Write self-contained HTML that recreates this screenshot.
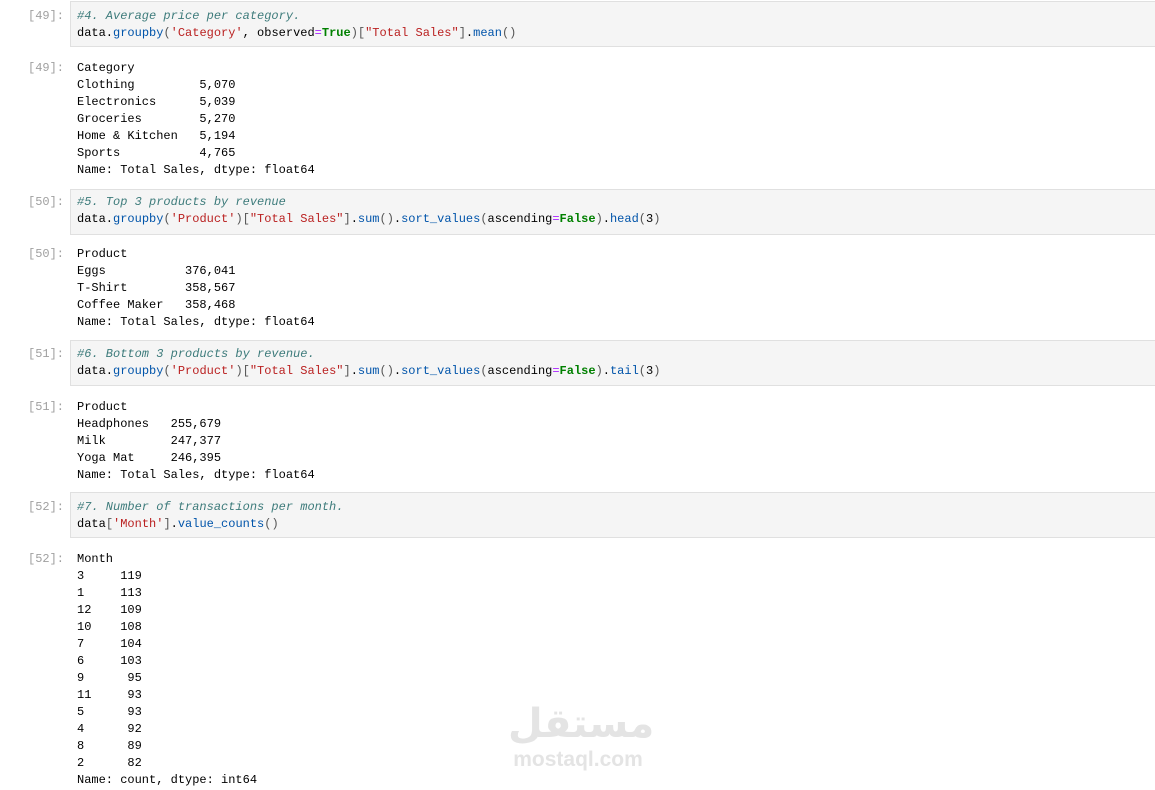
<!DOCTYPE html>
<html><head><meta charset="utf-8"><style>
body{margin:0;width:1155px;height:790px;background:#fff;position:relative;overflow:hidden;font-family:"Liberation Mono",monospace;font-size:12px;color:#000}
.box{position:absolute;left:70px;right:-2px;background:#f5f5f5;border:1px solid #e0e0e0;height:44px}
pre{position:absolute;margin:0;left:77px;font-family:"Liberation Mono",monospace;font-size:12px;line-height:17px;white-space:pre}
.lab{position:absolute;left:28px;color:#a0a0a0;font-family:"Liberation Mono",monospace;font-size:12px;line-height:17px}
.c{color:#3d7b7b;font-style:italic}.s{color:#ba2121}.k{color:#008000;font-weight:bold}.o{color:#aa22ff}.f{color:#0054aa}.b{color:#555}
.wm{position:absolute;left:508px;top:700px;color:#e4e4e4;font-family:"Liberation Sans","DejaVu Sans",sans-serif;font-weight:bold;text-align:center;width:140px}
</style></head><body>
<div class="box" style="top:1px"></div>
<div class="lab" style="top:8px">[49]:</div>
<pre style="top:8px"><span class="c">#4. Average price per category.</span>
data.<span class="f">groupby</span><span class="b">(</span><span class="s">'Category'</span>, observed<span class="o">=</span><span class="k">True</span><span class="b">)[</span><span class="s">"Total Sales"</span><span class="b">]</span>.<span class="f">mean</span><span class="b">()</span></pre>
<div class="lab" style="top:60px">[49]:</div>
<pre style="top:60px">Category
Clothing         5,070
Electronics      5,039
Groceries        5,270
Home &amp; Kitchen   5,194
Sports           4,765
Name: Total Sales, dtype: float64</pre>

<div class="box" style="top:189px"></div>
<div class="lab" style="top:194px">[50]:</div>
<pre style="top:194px"><span class="c">#5. Top 3 products by revenue</span>
data.<span class="f">groupby</span><span class="b">(</span><span class="s">'Product'</span><span class="b">)[</span><span class="s">"Total Sales"</span><span class="b">]</span>.<span class="f">sum</span><span class="b">()</span>.<span class="f">sort_values</span><span class="b">(</span>ascending<span class="o">=</span><span class="k">False</span><span class="b">)</span>.<span class="f">head</span><span class="b">(</span>3<span class="b">)</span></pre>
<div class="lab" style="top:246px">[50]:</div>
<pre style="top:246px">Product
Eggs           376,041
T-Shirt        358,567
Coffee Maker   358,468
Name: Total Sales, dtype: float64</pre>

<div class="box" style="top:340px"></div>
<div class="lab" style="top:346px">[51]:</div>
<pre style="top:346px"><span class="c">#6. Bottom 3 products by revenue.</span>
data.<span class="f">groupby</span><span class="b">(</span><span class="s">'Product'</span><span class="b">)[</span><span class="s">"Total Sales"</span><span class="b">]</span>.<span class="f">sum</span><span class="b">()</span>.<span class="f">sort_values</span><span class="b">(</span>ascending<span class="o">=</span><span class="k">False</span><span class="b">)</span>.<span class="f">tail</span><span class="b">(</span>3<span class="b">)</span></pre>
<div class="lab" style="top:399px">[51]:</div>
<pre style="top:399px">Product
Headphones   255,679
Milk         247,377
Yoga Mat     246,395
Name: Total Sales, dtype: float64</pre>

<div class="box" style="top:492px"></div>
<div class="lab" style="top:499px">[52]:</div>
<pre style="top:499px"><span class="c">#7. Number of transactions per month.</span>
data<span class="b">[</span><span class="s">'Month'</span><span class="b">]</span>.<span class="f">value_counts</span><span class="b">()</span></pre>
<div class="lab" style="top:551px">[52]:</div>
<pre style="top:551px">Month
3     119
1     113
12    109
10    108
7     104
6     103
9      95
11     93
5      93
4      92
8      89
2      82
Name: count, dtype: int64</pre>
<div class="wm"><div style="font-size:40px;line-height:48px;font-family:'DejaVu Sans',sans-serif">مستقل</div><div style="font-size:21px;line-height:24px">mostaql.com</div></div>
</body></html>
